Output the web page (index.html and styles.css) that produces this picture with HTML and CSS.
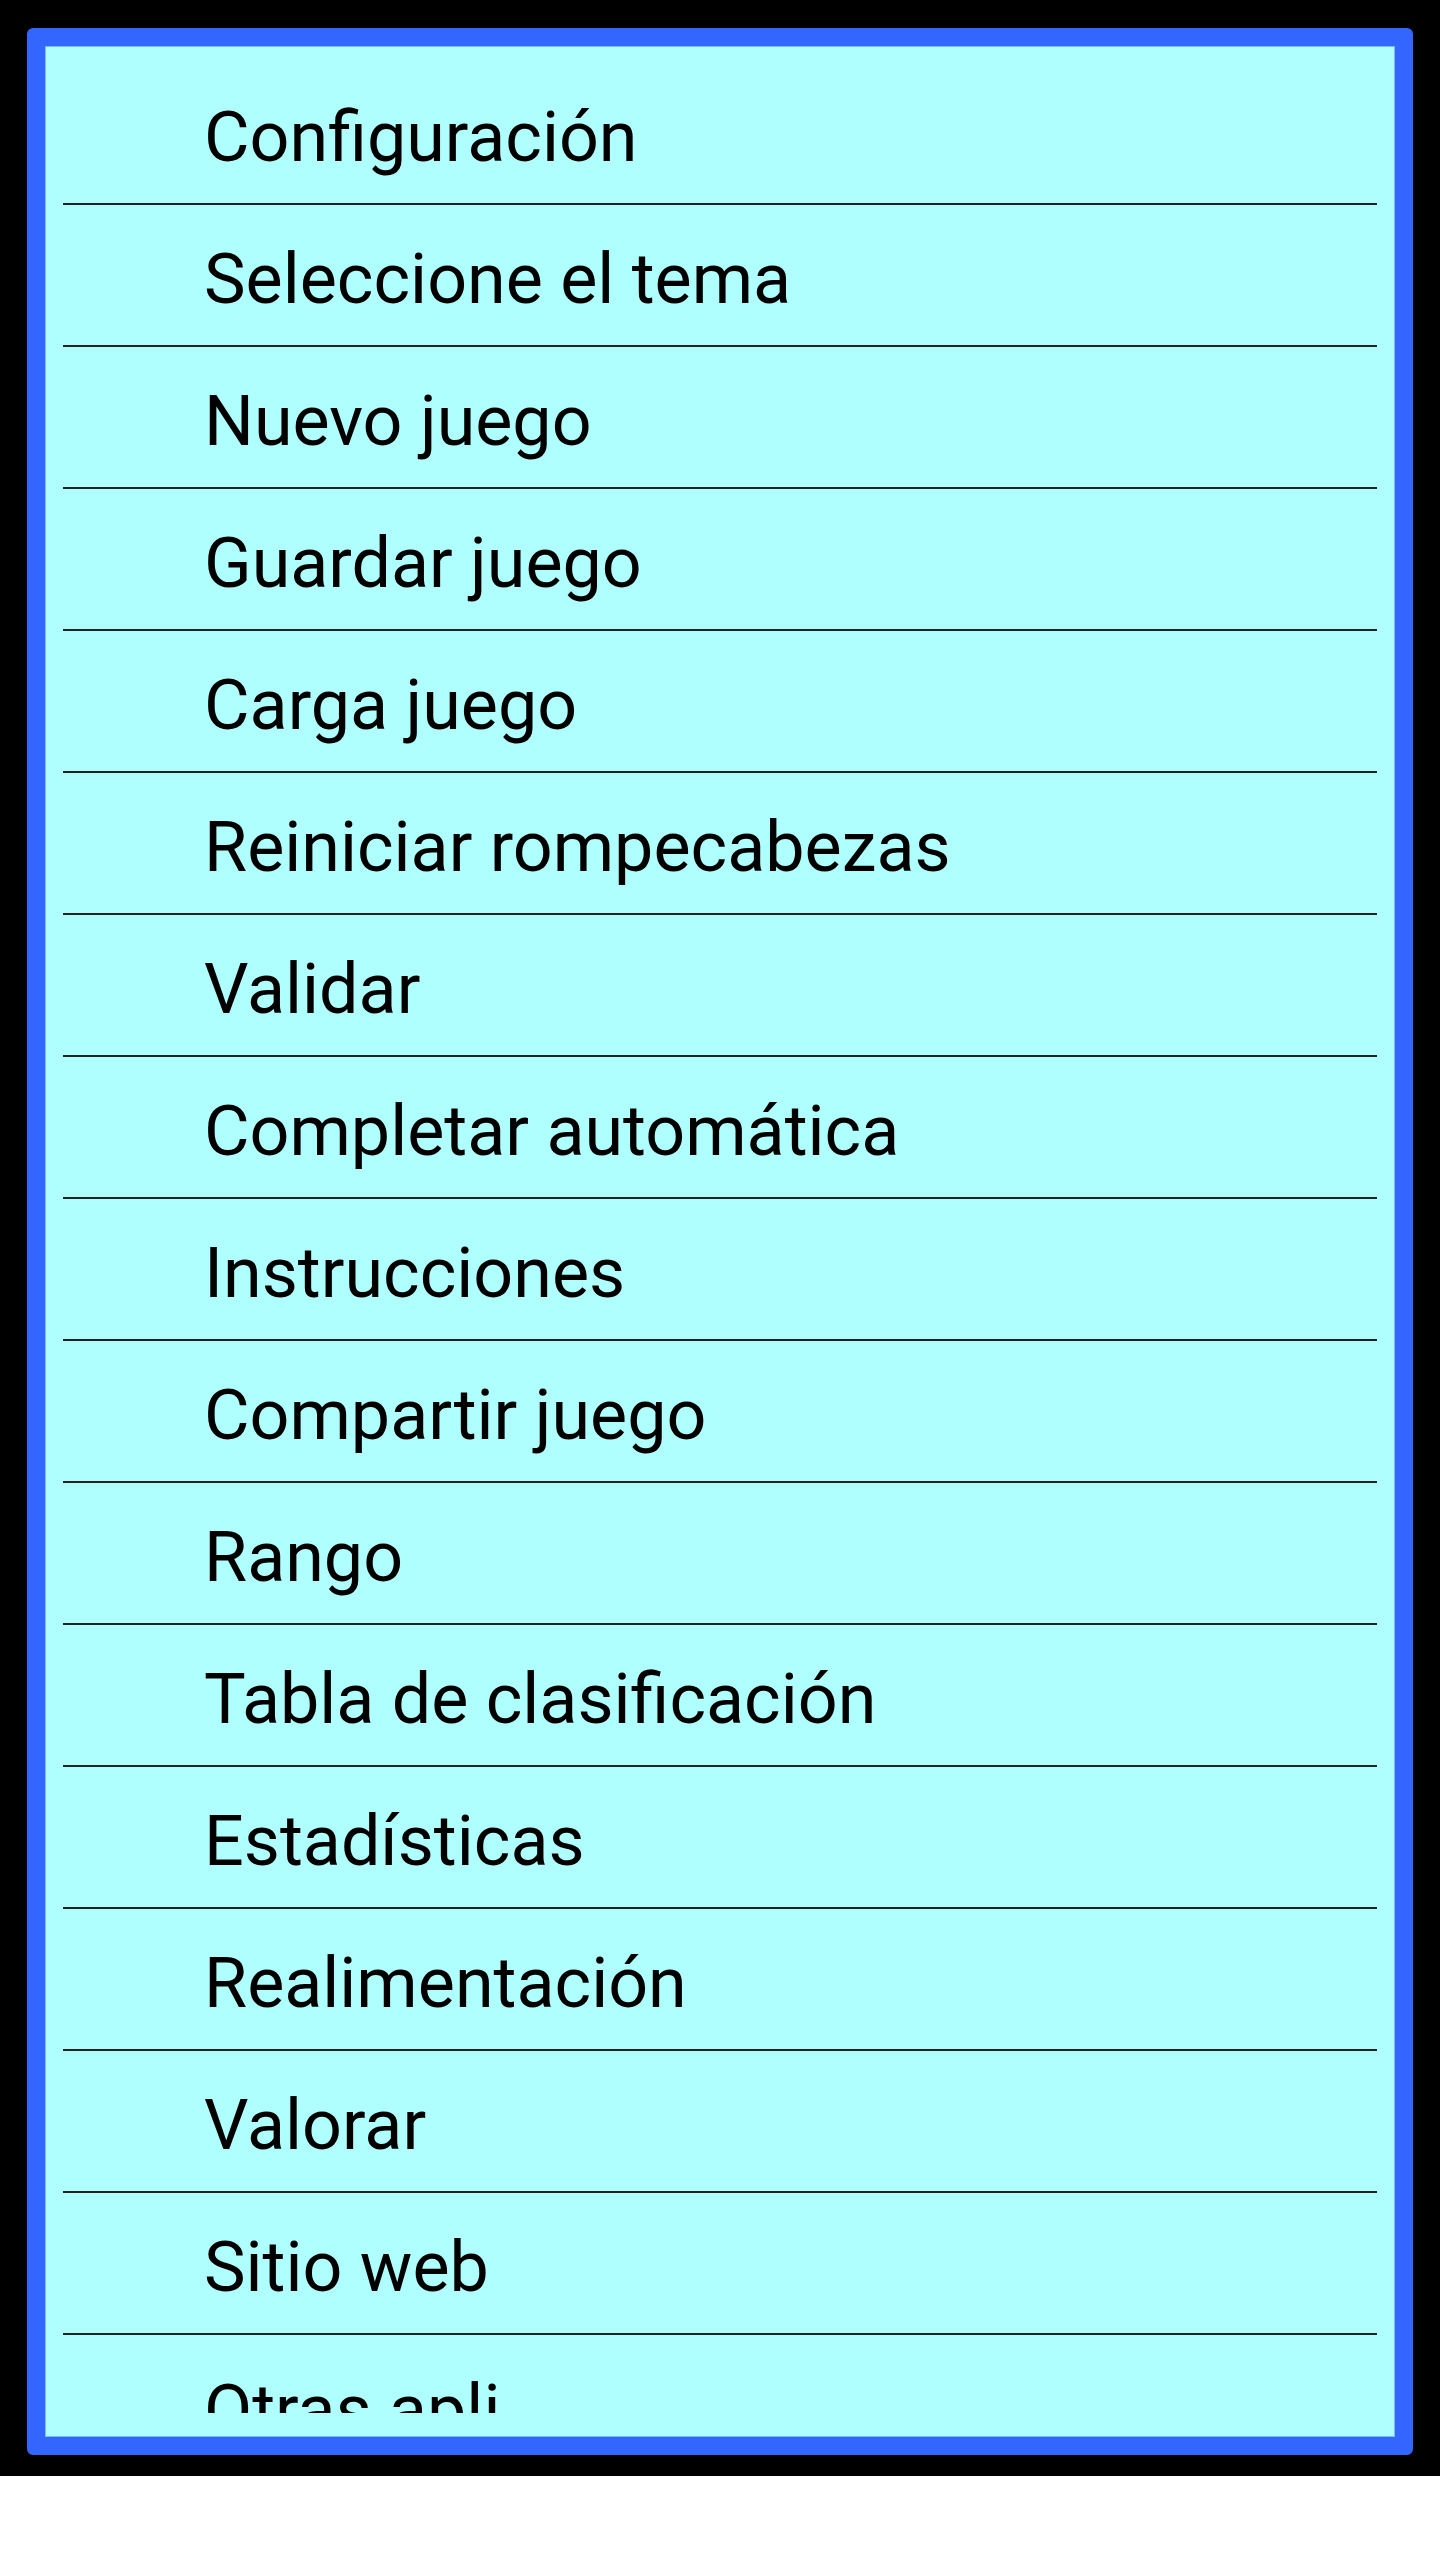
FILE: index.html
```html
<!DOCTYPE html>
<html lang="es">
<head>
<meta charset="utf-8">
<title>Menú</title>
<link rel="stylesheet" href="styles.css">
</head>
<body>
<div class="screen">
  <div class="panel">
    <ul class="menu">
      <li class="item">Configuración</li>
      <li class="item">Seleccione el tema</li>
      <li class="item">Nuevo juego</li>
      <li class="item">Guardar juego</li>
      <li class="item">Carga juego</li>
      <li class="item">Reiniciar rompecabezas</li>
      <li class="item">Validar</li>
      <li class="item">Completar automática</li>
      <li class="item">Instrucciones</li>
      <li class="item">Compartir juego</li>
      <li class="item">Rango</li>
      <li class="item">Tabla de clasificación</li>
      <li class="item">Estadísticas</li>
      <li class="item">Realimentación</li>
      <li class="item">Valorar</li>
      <li class="item">Sitio web</li>
      <li class="item">Otras apli</li>
    </ul>
  </div>
</div>
</body>
</html>
```
FILE: styles.css
```css
html, body {
  margin: 0;
  padding: 0;
  background: #ffffff;
}

.screen {
  box-sizing: border-box;
  height: 2476px;
  background: #000000;
  padding: 28px 27px 21px 27px;
}

.panel {
  box-sizing: border-box;
  height: 2427px;
  background: #b0ffff;
  border: 18px solid #3366ff;
  border-radius: 6px;
  box-shadow: inset 0 0 0 1px #80b8ff;
  padding: 17px 18px 25px 18px;
}

.menu {
  list-style: none;
  margin: 0;
  padding: 0;
  height: 2350px;
  overflow: hidden;
  display: flex;
  flex-direction: column;
}

.item {
  flex: 0 0 auto;
  box-sizing: border-box;
  height: 142px;
  padding: 8px 0 0 141px;
  border-bottom: 2px solid #222222;
  display: flex;
  align-items: center;
  font-family: Roboto, "Liberation Sans", sans-serif;
  font-size: 70px;
  color: #000000;
  white-space: nowrap;
}

.item:last-child {
  border-bottom: none;
}
```
